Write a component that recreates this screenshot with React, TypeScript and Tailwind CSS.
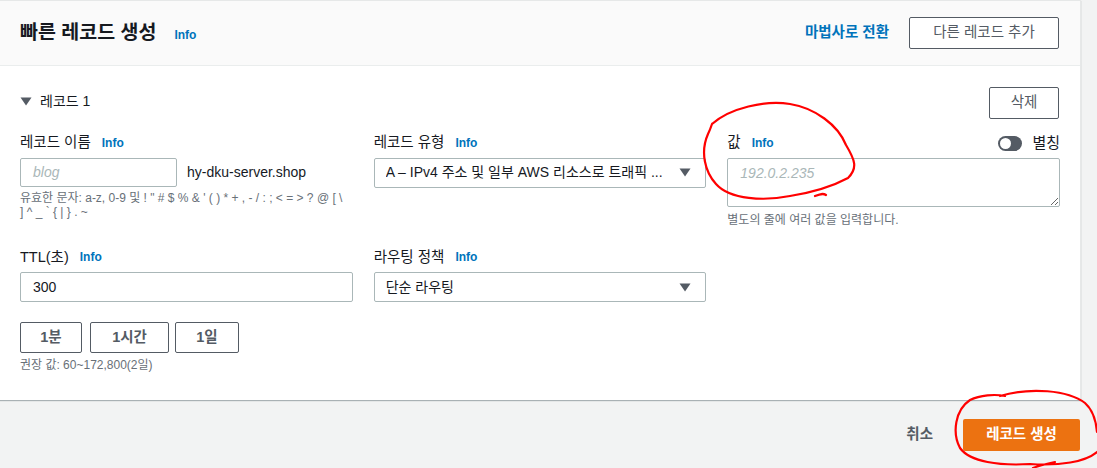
import React from "react";

const font = { fontFamily: '"Liberation Sans", "Noto Sans CJK KR", Arial, sans-serif' };

function Info() {
  return <span className="ml-[11px] text-[12px] font-bold text-[#0073bb]">Info</span>;
}

function Caret() {
  return (
    <svg width="12" height="9" viewBox="0 0 12 9" className="shrink-0">
      <path d="M0.5 0.5 H11.5 L6 8.5 Z" fill="#545b64" />
    </svg>
  );
}

function Select({ value }: { value: string }) {
  return (
    <div className="flex h-[30px] items-center justify-between rounded-[2px] border border-[#aab7b8] bg-white pl-[11px] pr-[14px] text-[14px] text-[#16191f]">
      <span className="truncate pr-2">{value}</span>
      <Caret />
    </div>
  );
}

export default function App() {
  return (
    <div style={font} className="relative h-[468px] w-[1097px] overflow-hidden bg-[#f2f3f3] text-[#16191f]">
      <div className="w-[1081px] border-t border-r border-[#e6e8e8] bg-white shadow-[0_1px_1px_0_rgba(0,28,36,0.3)]">
        <header className="flex h-[65px] items-center justify-between border-b border-[#eaeded] bg-[#fafafa] pl-[20px] pr-[21px]">
          <div className="flex items-baseline">
            <h1 className="text-[19.5px] font-bold">빠른 레코드 생성</h1>
            <span className="ml-[18px] text-[12px] font-bold text-[#0073bb]">Info</span>
          </div>
          <div className="flex items-center gap-[20px]">
            <span className="text-[14.5px] font-bold text-[#0073bb]">마법사로 전환</span>
            <button className="h-[32px] w-[150px] rounded-[2px] border border-[#545b64] bg-white text-[14.5px] text-[#545b64]">
              다른 레코드 추가
            </button>
          </div>
        </header>

        <div className="px-[20px] pb-[26px] pt-[21px]">
          <div className="flex items-start justify-between pr-[1px]">
            <div className="mt-[4px] flex items-center gap-[6px] text-[14px] text-[#16191f]">
              <svg width="12" height="9" viewBox="0 0 12 9">
                <path d="M0.5 0.5 H11.5 L6 8.5 Z" fill="#545b64" />
              </svg>
              <span className="ml-[2px]">레코드 1</span>
            </div>
            <button className="h-[32px] w-[70px] rounded-[2px] border border-[#545b64] bg-white text-[14.5px] text-[#545b64]">
              삭제
            </button>
          </div>

          <div className="mt-[13px] grid grid-cols-3 gap-x-[21px]">
            <div>
              <div className="flex items-center text-[14.5px]">
                레코드 이름 <Info />
              </div>
              <div className="mt-[4px] flex items-center">
                <div className="flex h-[29px] w-[157px] items-center rounded-[2px] border border-[#aab7b8] bg-white pl-[12px] text-[14px] italic text-[#aab7b8]">
                  blog
                </div>
                <span className="ml-[10px] text-[14px]">hy-dku-server.shop</span>
              </div>
              <p className="mt-[4px] text-[12px] leading-[14px] text-[#687078]">
                유효한 문자: a-z, 0-9 및 ! " # $ % &amp; ' ( ) * + , - / : ; &lt; = &gt; ? @ [ \
                <br />] ^ _ ` {"{"} | {"}"} . ~
              </p>
            </div>

            <div>
              <div className="flex items-center text-[14.5px]">
                레코드 유형 <Info />
              </div>
              <div className="mt-[4px]">
                <Select value="A – IPv4 주소 및 일부 AWS 리소스로 트래픽 ..." />
              </div>
            </div>

            <div>
              <div className="flex items-center justify-between text-[14.5px]">
                <div className="flex items-center">
                  값 <Info />
                </div>
                <div className="flex items-center gap-[10px]">
                  <span className="relative inline-block h-[15px] w-[24px] rounded-full bg-[#545b64]">
                    <span className="absolute left-[2px] top-[2px] h-[11px] w-[11px] rounded-full bg-white" />
                  </span>
                  <span className="text-[15px]">별칭</span>
                </div>
              </div>
              <textarea
                readOnly
                placeholder="192.0.2.235"
                className="mt-[3px] block h-[49px] w-full resize-y rounded-[2px] border border-[#aab7b8] bg-white px-[12px] py-[4px] text-[14px] placeholder:italic placeholder:text-[#aab7b8] outline-none"
              />
              <p className="mt-[4px] text-[12px] text-[#687078]">별도의 줄에 여러 값을 입력합니다.</p>
            </div>
          </div>

          <div className="mt-[18px] grid grid-cols-3 gap-x-[21px]">
            <div>
              <div className="flex items-center text-[14.5px]">
                TTL(초) <Info />
              </div>
              <div className="mt-[4px] flex h-[30px] items-center rounded-[2px] border border-[#aab7b8] bg-white pl-[12px] text-[14px]">
                300
              </div>
              <div className="mt-[20px] flex">
                <button className="h-[31px] w-[62px] rounded-[2px] border border-[#545b64] bg-white text-[14.5px] font-bold text-[#545b64]">1분</button>
                <button className="ml-[8px] h-[31px] w-[79px] rounded-[2px] border border-[#545b64] bg-white text-[14.5px] font-bold text-[#545b64]">1시간</button>
                <button className="ml-[6px] h-[31px] w-[64px] rounded-[2px] border border-[#545b64] bg-white text-[14.5px] font-bold text-[#545b64]">1일</button>
              </div>
              <p className="mt-[3px] text-[12px] text-[#687078]">권장 값: 60~172,800(2일)</p>
            </div>
            <div>
              <div className="flex items-center text-[14.5px]">
                라우팅 정책 <Info />
              </div>
              <div className="mt-[4px]">
                <Select value="단순 라우팅" />
              </div>
            </div>
            <div />
          </div>
        </div>
      </div>

      <div className="flex items-center justify-end gap-[30px] pr-[17px] pt-[19px]">
        <span className="text-[14.5px] font-bold text-[#545b64]">취소</span>
        <button className="h-[32px] w-[117px] rounded-[2px] bg-[#ec7211] text-[14.5px] font-bold text-white">레코드 생성</button>
      </div>

      <svg className="pointer-events-none absolute left-0 top-0" width="1097" height="468" viewBox="0 0 1097 468" fill="none">
        <path
          d="M712 124 C730 108 765 100 790 104 C815 108 838 125 846 145 C855 160 858 168 848 178 C835 185 815 192 790 196 C765 201 730 200 716 184 C705 172 700 152 708 134 C710 130 711 127 712 124 M815 196 C820 194 823 193 826 195"
          stroke="#ff0000"
          strokeWidth="2.2"
          strokeLinecap="round"
        />
        <path
          d="M1000 396 C1030 387 1068 390 1085 403 C1093 410 1096 420 1097 432 M1097 452 C1085 462 1060 466 1030 464 C1000 466 970 462 960 448 C952 433 955 410 970 400 C980 395 995 394 1005 396 M1055 462 C1045 464 1038 466 1033 468"
          stroke="#ff0000"
          strokeWidth="2.2"
          strokeLinecap="round"
        />
      </svg>
    </div>
  );
}
